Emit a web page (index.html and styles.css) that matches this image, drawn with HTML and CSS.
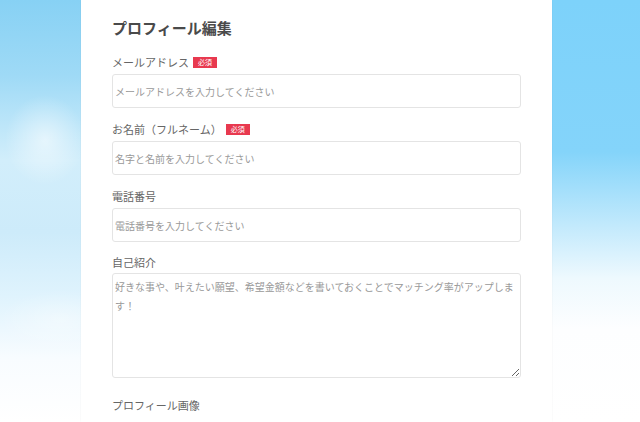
FILE: index.html
```html
<!DOCTYPE html>
<html lang="ja">
<head>
<meta charset="utf-8">
<title>プロフィール編集</title>
<link rel="stylesheet" href="styles.css">
</head>
<body>
<main class="card">
  <h1 class="title">プロフィール編集</h1>
  <div class="field">
    <label class="label">メールアドレス<span class="badge">必須</span></label>
    <input class="input" type="text" placeholder="メールアドレスを入力してください">
  </div>
  <div class="field">
    <label class="label">お名前（フルネーム）<span class="badge">必須</span></label>
    <input class="input" type="text" placeholder="名字と名前を入力してください">
  </div>
  <div class="field field-tight">
    <label class="label">電話番号</label>
    <input class="input" type="text" placeholder="電話番号を入力してください">
  </div>
  <div class="field field-area">
    <label class="label">自己紹介</label>
    <textarea class="textarea" placeholder="好きな事や、叶えたい願望、希望金額などを書いておくことでマッチング率がアップします！"></textarea>
  </div>
  <div class="field">
    <label class="label">プロフィール画像</label>
  </div>
</main>
</body>
</html>
```
FILE: styles.css
```css
html, body {
  margin: 0;
  height: 100%;
}
body {
  font-family: "Noto Sans CJK JP", "Noto Sans", sans-serif;
  overflow: hidden;
  background-color: #fff;
  background-repeat: no-repeat;
  background-image:
    radial-gradient(ellipse 40px 45px at 45px 140px, rgba(255,255,255,0.55), rgba(255,255,255,0) 100%),
    radial-gradient(ellipse 60px 30px at 60px 320px, rgba(255,255,255,0.35), rgba(255,255,255,0) 100%),
    linear-gradient(to bottom, #87d1f4 0%, #9fdaf6 18%, #d2eefb 38%, #cdebfa 55%, #dff3fd 70%, #f8fcff 85%, #ffffff 100%),
    linear-gradient(to bottom, #7dd2fa 0%, #84d4fa 36%, #c4eafc 54%, #eef9fe 66%, #fdfeff 78%, #ffffff 100%);
  background-size: 100% 100%, 100% 100%, 81px 100%, 88px 100%;
  background-position: 0 0, 0 0, 0 0, 552px 0;
}
.card {
  box-sizing: border-box;
  width: 471px;
  min-height: 100%;
  margin-left: 81px;
  padding: 18px 31px 0;
  background: #fff;
  box-shadow: 0 0 2px rgba(0,0,0,0.05);
}
.title {
  margin: 0 0 17px;
  font-size: 15px;
  line-height: 20px;
  font-weight: 700;
  color: #4a4a4a;
}
.field {
  margin-bottom: 14px;
}
.field-tight {
  margin-bottom: 13px;
}
.label {
  display: flex;
  align-items: center;
  height: 14px;
  margin-bottom: 5px;
  font-size: 11px;
  line-height: 14px;
  color: #666;
}
.field-area .label {
  margin-bottom: 4px;
}
.badge {
  display: inline-block;
  margin-left: 4px;
  padding: 0 5px;
  height: 11px;
  line-height: 11px;
  font-size: 7px;
  color: #fff;
  background: #e8394f;
}
.input, .textarea {
  display: block;
  box-sizing: border-box;
  width: 409px;
  margin: 0;
  border: 1px solid #e4e4e4;
  border-radius: 3px;
  padding: 0 2px;
  font-family: "Noto Sans CJK JP", "Noto Sans", sans-serif;
  font-size: 10px;
  color: #555;
  background: #fff;
  outline: none;
}
.input {
  height: 34px;
}
.textarea {
  height: 105px;
  padding: 3px 2px;
  line-height: 19px;
  resize: vertical;
}
.field-area {
  margin-bottom: 20px;
}
.input::placeholder, .textarea::placeholder {
  color: #999;
}
```
